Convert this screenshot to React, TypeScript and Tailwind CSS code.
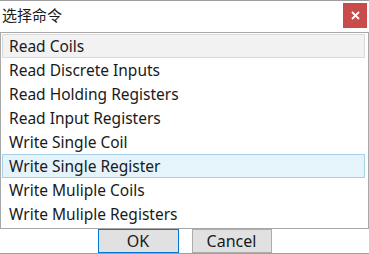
const commands = [
  "Read Coils",
  "Read Discrete Inputs",
  "Read Holding Registers",
  "Read Input Registers",
  "Write Single Coil",
  "Write Single Register",
  "Write Muliple Coils",
  "Write Muliple Registers",
];

const font = { fontFamily: '"Noto Sans", "Noto Sans CJK SC", sans-serif' };

export default function App() {
  const focused = 0;
  const hovered = 5;

  return (
    <div
      style={font}
      className="w-[369px] h-[254px] bg-white flex flex-col border-t border-[#a0a0a0] text-[#1a1a1a] overflow-hidden"
    >
      {/* title bar */}
      <div className="h-[31px] flex items-start justify-between pl-[2px] pr-[2px]">
        <span className="text-[15px] leading-[20px] mt-[4px]">选择命令</span>
        <button className="w-[24px] h-[25px] mt-[2px] bg-[#c94c4c] text-white flex items-center justify-center">
          <svg width="9" height="9" viewBox="0 0 9 9">
            <path d="M1 1 L8 8 M8 1 L1 8" stroke="white" strokeWidth="1.8" />
          </svg>
        </button>
      </div>

      {/* command list */}
      <ul className="h-[197px] border border-[#a8a8a8] p-[1px] pr-[3px]">
        {commands.map((c, i) => (
          <li
            key={c}
            className={
              "h-[24px] px-[6px] pt-[2px] flex items-center text-[15.5px] border " +
              (i === focused
                ? "bg-[#f2f2f2] border-[#dadada]"
                : i === hovered
                ? "bg-[#e5f3fb] border-[#a6d0ea]"
                : "border-transparent")
            }
          >
            {c}
          </li>
        ))}
      </ul>

      {/* buttons */}
      <div className="flex justify-center gap-[13px] h-[24px]">
        <button className="w-[81px] h-[24px] bg-[#e1e1e1] border border-[#0078d7] text-[16px] leading-none">
          OK
        </button>
        <button className="w-[80px] h-[24px] bg-[#e1e1e1] border border-[#adadad] text-[16px] leading-none">
          Cancel
        </button>
      </div>
      <div className="border-t border-[#a0a0a0]" />
    </div>
  );
}
